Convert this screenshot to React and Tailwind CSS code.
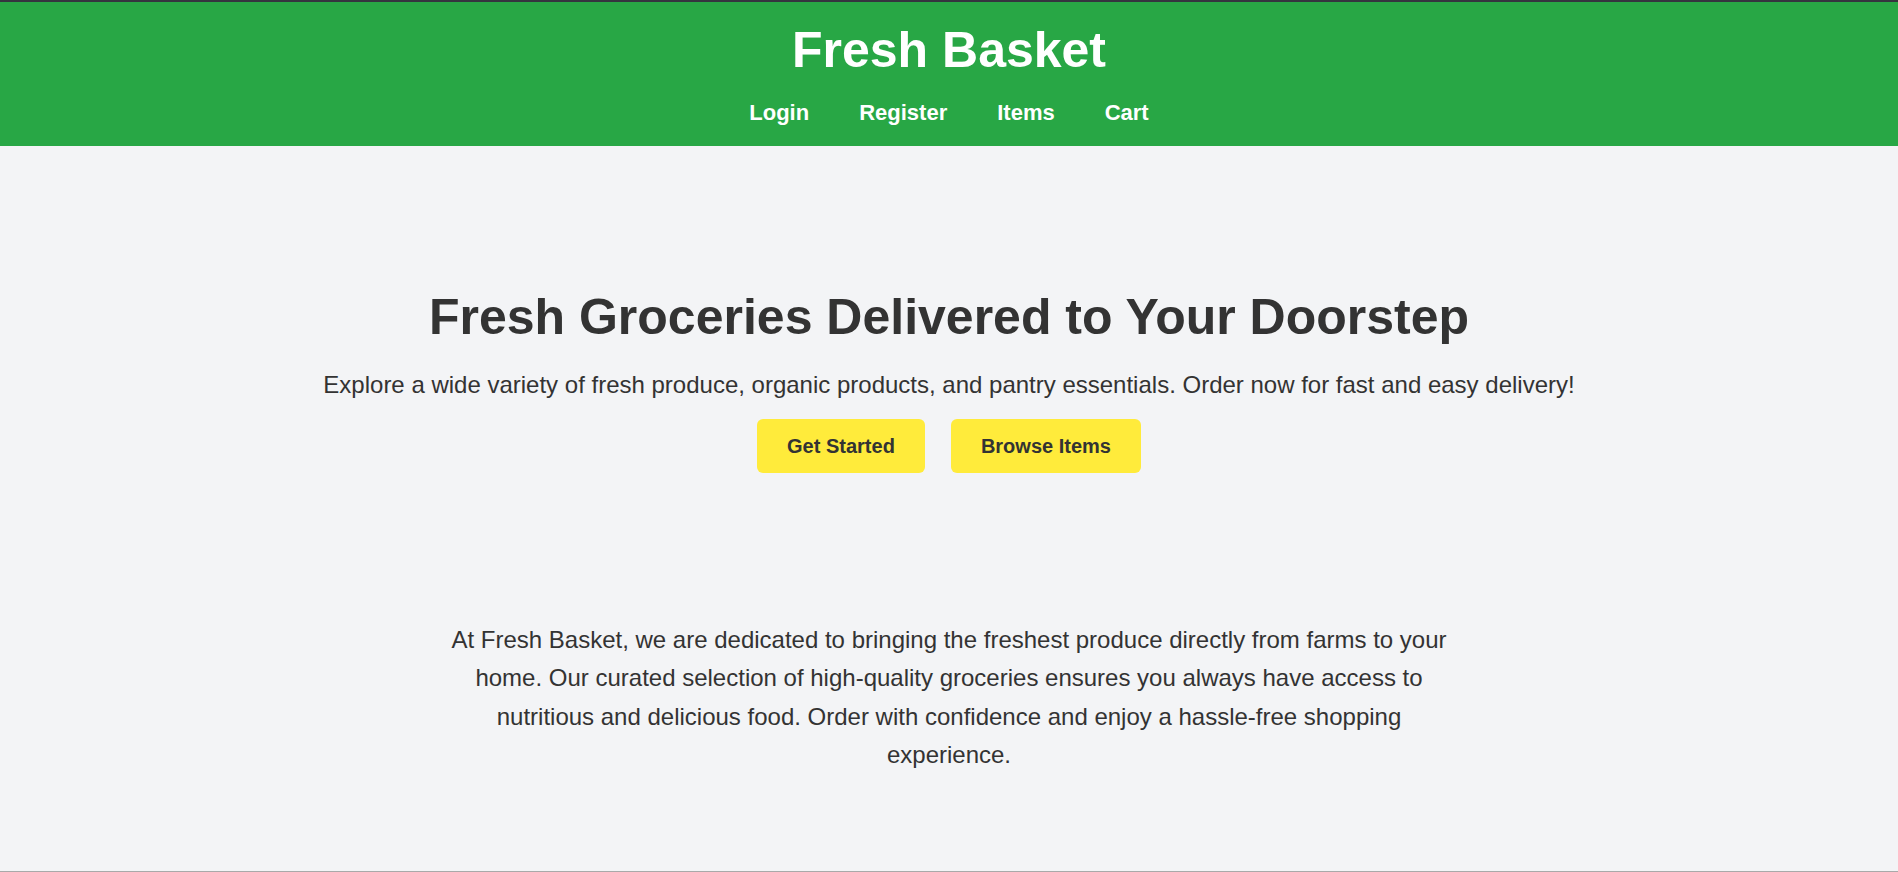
export default function App() {
  const links = ['Login', 'Register', 'Items', 'Cart']

  return (
    <div
      className="flex flex-col h-[872px] bg-[#f3f4f6] text-[#333] border-b border-[#a9a9a9] overflow-hidden"
      style={{ fontFamily: '"Liberation Sans", Arial, sans-serif' }}
    >
      {/* Header */}
      <header className="shrink-0 bg-[#28a745] border-t-2 border-[#35343f] pt-[20px] pb-[21px] text-white text-center">
        <h1 className="text-[50px] leading-[56px] font-bold">Fresh Basket</h1>
        <nav className="mt-[22px] flex justify-center gap-[50px]">
          {links.map(link => (
            <a key={link} href="#" className="text-[22px] leading-[25px] font-bold text-white">
              {link}
            </a>
          ))}
        </nav>
      </header>

      {/* Hero */}
      <main className="flex flex-col items-center text-center">
        <section className="pt-[143px] flex flex-col items-center">
          <h2 className="text-[50px] leading-[56px] font-bold text-[#333]">
            Fresh Groceries Delivered to Your Doorstep
          </h2>
          <p className="mt-[26px] text-[24px] leading-[27px] text-[#333]">
            Explore a wide variety of fresh produce, organic products, and pantry essentials. Order now for fast and easy delivery!
          </p>
          <div className="mt-[21px] flex gap-[26px]">
            <button className="h-[54px] px-[30px] rounded-[6px] bg-[#ffeb3b] text-[#333] text-[20px] font-bold">
              Get Started
            </button>
            <button className="h-[54px] px-[30px] rounded-[6px] bg-[#ffeb3b] text-[#333] text-[20px] font-bold">
              Browse Items
            </button>
          </div>
        </section>

        {/* About */}
        <section className="mt-[148px] max-w-[1000px]">
          <p className="text-[24px] leading-[38.4px] text-[#333]">
            At Fresh Basket, we are dedicated to bringing the freshest produce directly from farms to your home. Our curated selection of high-quality groceries ensures you always have access to nutritious and delicious food. Order with confidence and enjoy a hassle-free shopping experience.
          </p>
        </section>
      </main>
    </div>
  )
}
